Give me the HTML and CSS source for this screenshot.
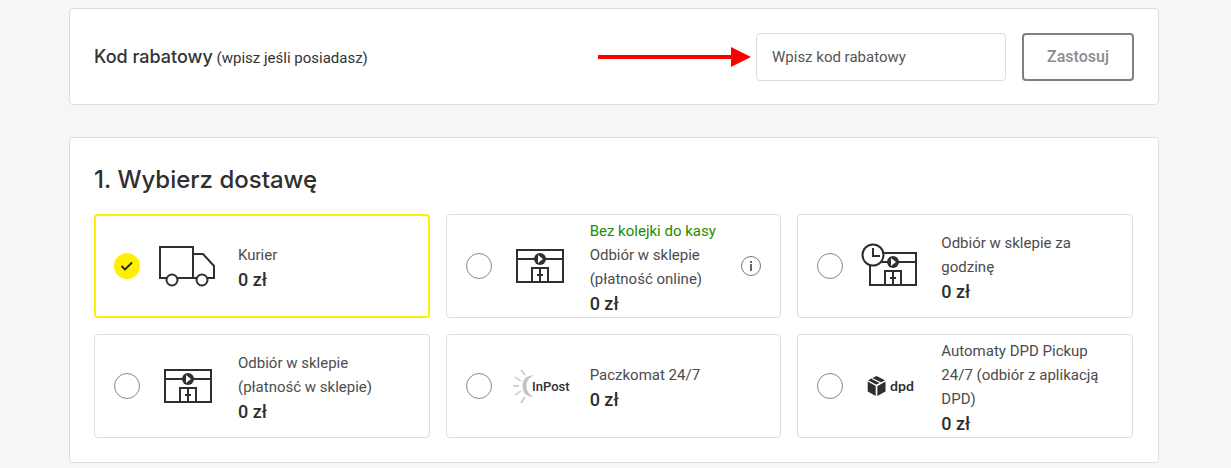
FILE: index.html
```html
<!DOCTYPE html>
<html lang="pl">
<head>
<meta charset="utf-8">
<meta name="viewport" content="width=device-width, initial-scale=1">
<title>Dostawa</title>
<link rel="stylesheet" href="styles.css">
</head>
<body>
<svg class="defs" aria-hidden="true">
  <symbol id="store" viewBox="0 0 66 56">
    <path d="M9 12h46v32H9zM9 21h46" fill="none" stroke="#2f2f2f" stroke-width="2"/>
    <circle cx="32" cy="21" r="6" fill="#2f2f2f"/>
    <path d="M30 17v8l5-4z" fill="#fff"/>
    <path d="M24 44V30h16v14M32 30v14M29 37h6" fill="none" stroke="#2f2f2f" stroke-width="2"/>
  </symbol>
</svg>
<main class="page">
  <form class="card coupon">
    <label class="coupon-label" for="code"><span class="coupon-title">Kod rabatowy</span> (wpisz jeśli posiadasz)</label>
    <svg class="arrow" viewBox="0 0 153 20" aria-hidden="true"><path d="M0 8h133V0l20 10-20 10v-8H0z" fill="#f00"/></svg>
    <input class="coupon-input" id="code" type="text" placeholder="Wpisz kod rabatowy">
    <button class="coupon-button" type="button">Zastosuj</button>
  </form>

  <section class="card delivery">
    <h2 class="heading">1. Wybierz dostawę</h2>
    <div class="options">
      <label class="option">
        <input class="radio" type="radio" name="delivery" checked>
        <svg class="icon" viewBox="0 0 66 56" aria-hidden="true">
          <g fill="none" stroke="#2f2f2f" stroke-width="2">
            <path d="M4 9h33v31H4zM37 16h10l11 12v12H37"/>
            <circle cx="16" cy="42" r="5.5" fill="#fff"/>
            <circle cx="46" cy="42" r="5.5" fill="#fff"/>
          </g>
        </svg>
        <span class="info"><span>Kurier</span><strong class="price">0 zł</strong></span>
      </label>
      <div class="option">
        <input class="radio" type="radio" name="delivery" id="online">
        <svg class="icon" aria-hidden="true"><use href="#store"/></svg>
        <label class="info" for="online"><span class="promo">Bez kolejki do kasy</span><span>Odbiór w sklepie (płatność online)</span><strong class="price">0 zł</strong></label>
        <button class="help" type="button" aria-label="Informacje">
          <svg viewBox="0 0 20 20" aria-hidden="true"><circle cx="10" cy="10" r="9.5" fill="none" stroke="#777"/><path d="M9 5h2v2H9zM9 8h2v7H9z" fill="#666"/></svg>
        </button>
      </div>
      <label class="option">
        <input class="radio" type="radio" name="delivery">
        <svg class="icon" viewBox="0 0 66 56" aria-hidden="true">
          <use href="#store" x="2" y="3" width="66" height="56"/>
          <circle cx="14" cy="17" r="10.5" fill="#fff" stroke="#2f2f2f" stroke-width="2"/>
          <path d="M14 10v8h7" fill="none" stroke="#2f2f2f" stroke-width="2"/>
        </svg>
        <span class="info"><span>Odbiór w sklepie za godzinę</span><strong class="price">0 zł</strong></span>
      </label>
      <label class="option">
        <input class="radio" type="radio" name="delivery">
        <svg class="icon" aria-hidden="true"><use href="#store"/></svg>
        <span class="info"><span>Odbiór w sklepie (płatność w sklepie)</span><strong class="price">0 zł</strong></span>
      </label>
      <label class="option">
        <input class="radio" type="radio" name="delivery">
        <svg class="icon" viewBox="0 0 66 56" aria-hidden="true">
          <path d="M26 17.500C18 16.500 14.500 22 14.500 28S18 39.500 26 38.500C21 37 18.500 33 18.500 28S21 19 26 17.500z" fill="#c4c4c4"/>
          <path d="M13 12l4 5M7 19l6 4M5 28h6M7 37l6-4M13 45l4-6" fill="none" stroke="#c4c4c4" stroke-width="1.500"/>
          <text class="logo-inpost" x="24" y="33">InPost</text>
        </svg>
        <span class="info"><span>Paczkomat 24/7</span><strong class="price">0 zł</strong></span>
      </label>
      <label class="option">
        <input class="radio" type="radio" name="delivery">
        <svg class="icon" viewBox="0 0 66 56" aria-hidden="true">
          <path d="M17.500 18l8.500 4.300-8.500 4.500L9 22.300zM8.700 23.500l8.100 4.400v10L8.700 33.500zM26.500 23.500v10L18.300 38V27.900z" fill="#2f2f2f"/>
          <path d="M13 20.500l9 4.500M17.500 27v8M17.500 27.300l5-2.500" stroke="#fff" stroke-width="1.300" fill="none"/>
          <text class="logo-dpd" x="31" y="33">dpd</text>
        </svg>
        <span class="info"><span>Automaty DPD Pickup 24/7 (odbiór z aplikacją DPD)</span><strong class="price">0 zł</strong></span>
      </label>
    </div>
  </section>
</main>
</body>
</html>
```
FILE: styles.css
```css
* { box-sizing: border-box; }
body {
  margin: 0;
  background: #f6f6f6;
  color: #4c4c4c;
  font: 15px/24px Roboto, "Liberation Sans", sans-serif;
}
.defs { display: none; }
.page {
  display: flex;
  flex-direction: column;
  gap: 32px;
  padding: 8px 72px 4px 69px;
}
.card {
  background: #fff;
  border: 1px solid #ddd;
  border-radius: 4px;
  padding: 24px;
}
.delivery { padding-right: 25px; }
.coupon {
  display: flex;
  align-items: center;
  padding-bottom: 23px;
}
.coupon-label { color: #333; }
.coupon-title { font: 500 18px/24px Inter, sans-serif; }
.arrow { width: 153px; height: 20px; margin: 0 5px 0 auto; }
.coupon-input {
  width: 250px;
  height: 48px;
  padding: 0 15px;
  border: 1px solid #ddd;
  border-radius: 4px;
  background: #fff;
  color: #555;
  font: inherit;
}
.coupon-input::placeholder { color: #555; opacity: 1; }
.coupon-button {
  width: 112px;
  height: 48px;
  margin-left: 16px;
  border: 2px solid #808080;
  border-radius: 4px;
  background: #fff;
  color: #8c8c8c;
  font: 500 16px/24px Roboto, sans-serif;
}
.heading {
  margin: 0 0 16px;
  color: #2f2f2f;
  font: 500 24px/36px Inter, sans-serif;
}
.options {
  display: grid;
  grid-template-columns: repeat(3, 1fr);
  gap: 16px;
}
.option {
  display: flex;
  align-items: center;
  gap: 16px;
  min-height: 104px;
  padding: 0 19px;
  border: 1px solid #ddd;
  border-radius: 4px;
}
.option:has(.radio:checked) {
  border: 2px solid #fff000;
  padding: 0 18px;
}
.radio {
  appearance: none;
  flex: none;
  width: 26px;
  height: 26px;
  margin: 0;
  border: 1px solid #888;
  border-radius: 50%;
}
.radio:checked {
  border: 0;
  background: #fff000 url("data:image/svg+xml,%3Csvg xmlns='http://www.w3.org/2000/svg' viewBox='0 0 26 26'%3E%3Cpath d='M7.500 13l3.500 3.500L18 9.500' fill='none' stroke='%23222' stroke-width='1.800'/%3E%3C/svg%3E");
}
.icon { flex: none; width: 66px; height: 56px; overflow: visible; }
.info { display: flex; flex: 1; flex-direction: column; min-width: 0; padding-top: 4px; }
.promo { color: #1f8a00; }
.price { color: #2f2f2f; font: 500 18px/26px Roboto, sans-serif; }
.help {
  flex: none;
  width: 20px;
  height: 20px;
  padding: 0;
  border: 0;
  background: none;
}
.help svg { display: block; }
.logo-inpost { font: 500 13px Roboto, sans-serif; fill: #2f2f2f; }
.logo-dpd { font: 700 14px Lato, sans-serif; fill: #2f2f2f; }
```
